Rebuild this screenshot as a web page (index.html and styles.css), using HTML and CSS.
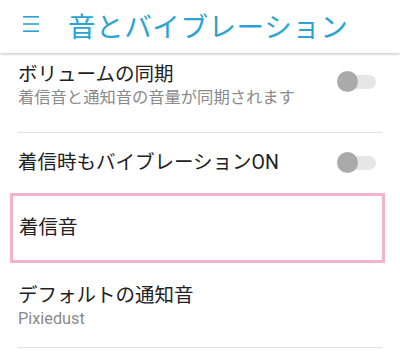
FILE: index.html
```html
<!DOCTYPE html>
<html lang="ja">
<head>
  <meta charset="UTF-8" />
  <meta name="viewport" content="width=device-width, initial-scale=1.0"/>
  <title>音とバイブレーション</title>
  <link rel="stylesheet" href="styles.css">
</head>
<body>
  <div class="app-bar">
    <svg class="menu-icon" width="16" height="17" viewBox="0 0 16 17">
      <rect x="0" y="0" width="16" height="1.6" fill="#2ba3d3"/>
      <rect x="0" y="7.2" width="16" height="1.6" fill="#2ba3d3"/>
      <rect x="0" y="14.4" width="16" height="1.6" fill="#2ba3d3"/>
    </svg>
    <h1>音とバイブレーション</h1>
  </div>

  <div class="settings">
    <div class="row row-sync">
      <div class="row-text">
        <div class="title">ボリュームの同期</div>
        <div class="summary">着信音と通知音の音量が同期されます</div>
      </div>
      <div class="switch"><span class="thumb"></span></div>
    </div>

    <div class="row row-vibrate">
      <div class="row-text">
        <div class="title">着信時もバイブレーションON</div>
      </div>
      <div class="switch"><span class="thumb"></span></div>
    </div>

    <div class="row row-ringtone">
      <div class="row-text">
        <div class="title">着信音</div>
      </div>
    </div>

    <div class="row row-notify">
      <div class="row-text">
        <div class="title">デフォルトの通知音</div>
        <div class="summary">Pixiedust</div>
      </div>
    </div>
  </div>
</body>
</html>
```

FILE: styles.css
```css
body {
  margin: 0;
  background: #ffffff;
  font-family: Roboto, "Noto Sans CJK JP", sans-serif;
  color: #222222;
  width: 400px;
  height: 353px;
  overflow: hidden;
}

.app-bar {
  height: 53px;
  display: flex;
  align-items: center;
  background: #ffffff;
  box-shadow: 0 1px 3px rgba(0, 0, 0, 0.25);
  position: relative;
  z-index: 2;
}

.menu-icon {
  margin-left: 23px;
  margin-top: -5px;
}

.app-bar h1 {
  margin: -4px 0 0 29px;
  font-size: 27.5px;
  font-weight: normal;
  color: #2ba3d3;
  letter-spacing: 0.6px;
}

.row {
  display: flex;
  align-items: center;
  margin: 0 18px;
}

.row-text {
  flex: 1;
}

.title {
  font-size: 19.5px;
  color: #222222;
  line-height: 24px;
}

.title-on {
  letter-spacing: 0.3px;
}

.summary {
  font-size: 16.3px;
  color: #8a8a8a;
  line-height: 21px;
}

.row-sync {
  height: 77px;
  padding-bottom: 2px;
  border-bottom: 1px solid #e2e2e2;
  align-items: flex-start;
}

.row-sync .row-text {
  padding-top: 10px;
}

.row-sync .switch {
  margin-top: 22px;
}

.row-vibrate {
  height: 60px;
}

.row-ringtone {
  margin: 0 15px 0 10px;
  height: 64px;
  border: 3px solid #f3b3ca;
  padding-left: 6px;
}

.row-notify {
  height: 82px;
  border-bottom: 1px solid #e2e2e2;
  padding-top: 2px;
}

.switch {
  position: relative;
  width: 38px;
  height: 14px;
  border-radius: 7px;
  background: #e6e6e6;
  margin-right: 6px;
}

.switch .thumb {
  position: absolute;
  left: -1px;
  top: -4px;
  width: 21px;
  height: 21px;
  border-radius: 50%;
  background: #aaaaaa;
}
```
